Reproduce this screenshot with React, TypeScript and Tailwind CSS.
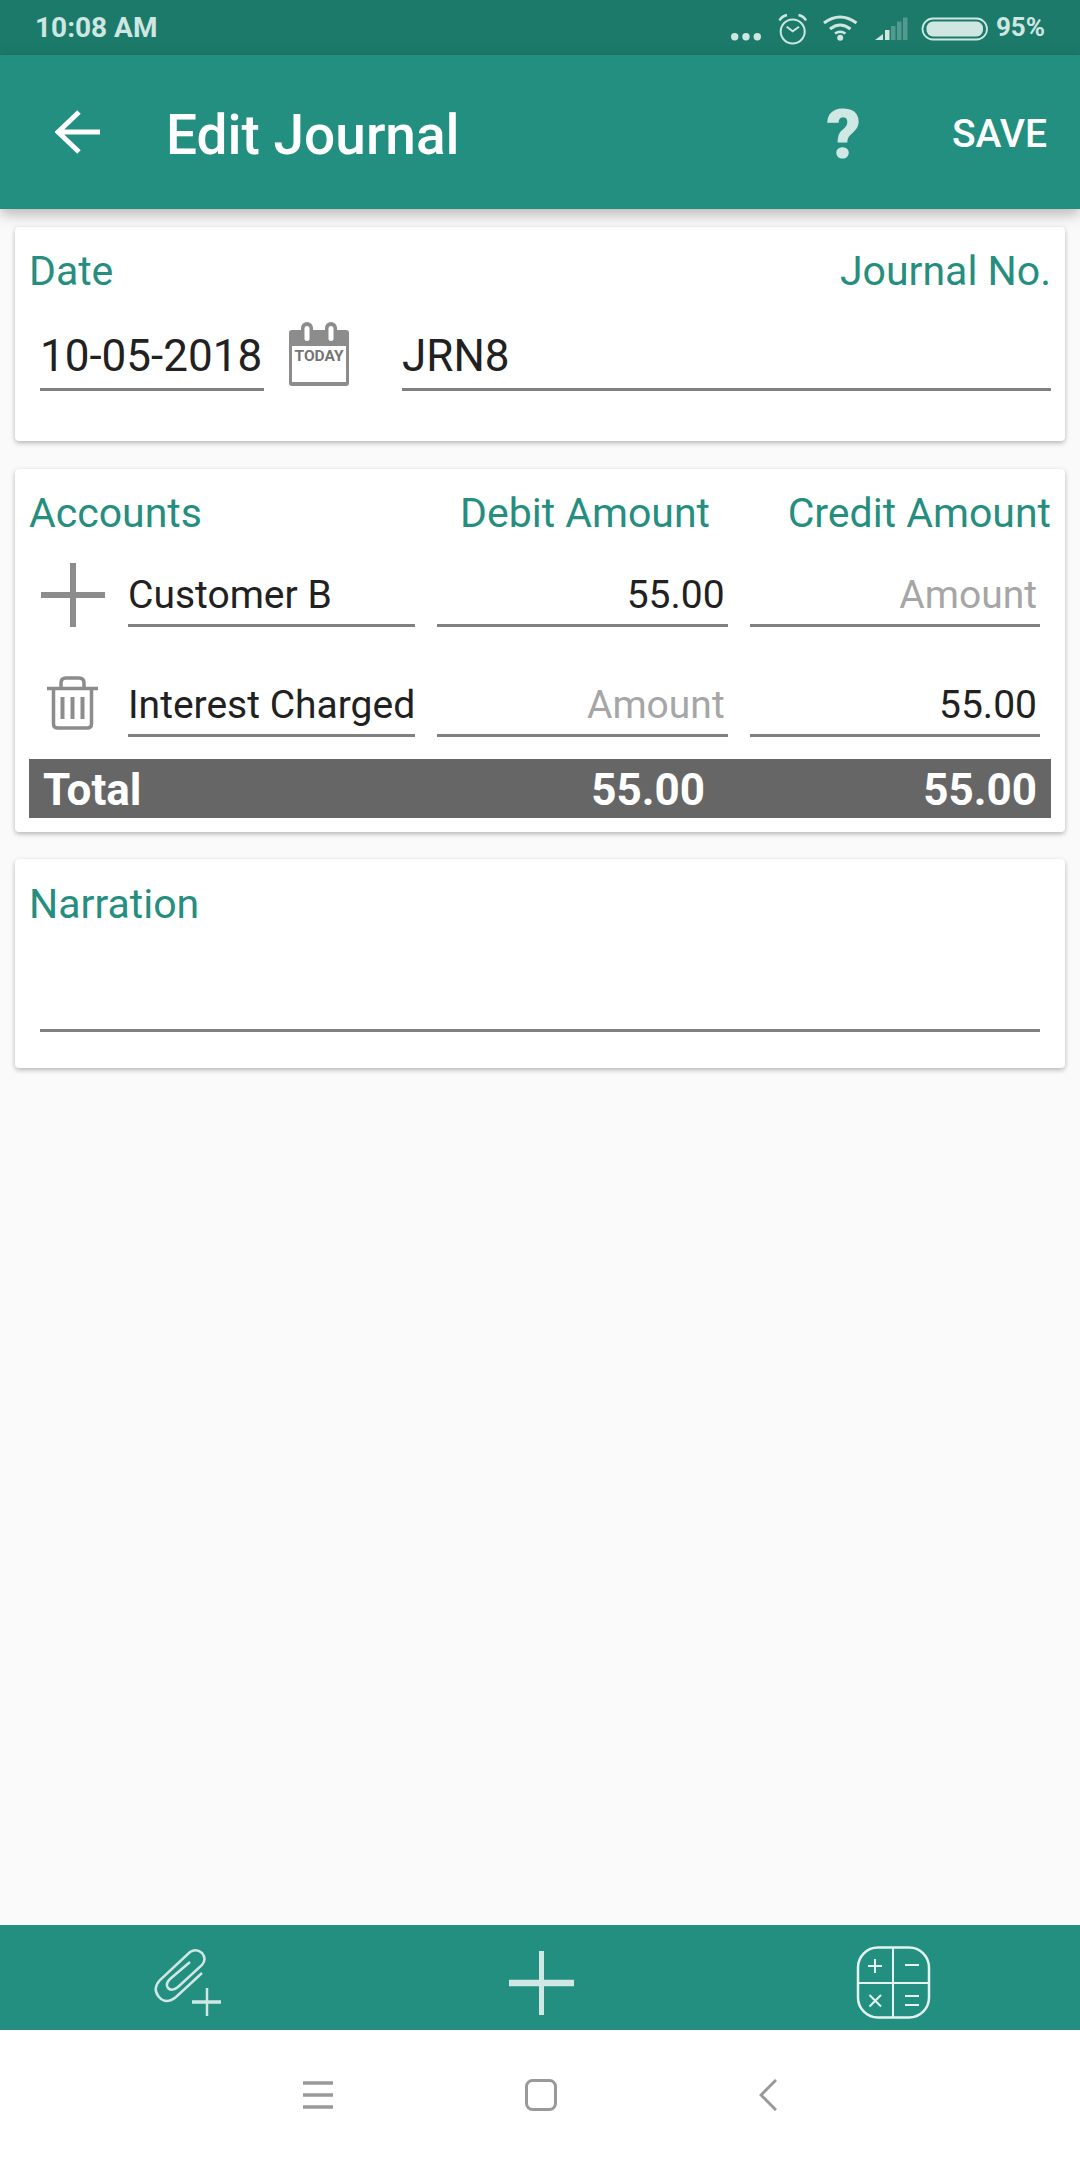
import type { ReactNode } from 'react';

function StatusIcons() {
  return (
    <svg width="270" height="45" viewBox="0 0 270 45" fill="none" stroke="#cfe6e1" className="block">
      <g fill="#cfe6e1" stroke="none">
        <circle cx="14.7" cy="30.7" r="3.7" />
        <circle cx="26" cy="30.7" r="3.7" />
        <circle cx="37.3" cy="30.7" r="3.7" />
      </g>
      <circle cx="72.7" cy="25.5" r="12" strokeWidth="2" />
      <path d="M59.5 14.5Q62 10 67 9M86 14.5Q83.5 10 78.500 9" strokeWidth="2.500" />
      <path d="M66.700 20.700L72.700 25.300L79 20.700" strokeWidth="2" />
      <path d="M104 17Q120 5 136.500 17M110 23Q120 15 130.500 23" strokeWidth="3" />
      <path d="M115 27.500Q120 24 125.500 27.500" strokeWidth="2.500" />
      <circle cx="120.200" cy="31.700" r="3" fill="#cfe6e1" stroke="none" />
      <g fill="#cfe6e1" stroke="none">
        <path d="M155 34L163 28V34Z" />
        <rect x="165" y="24" width="4.500" height="10" />
        <rect x="171" y="20" width="4.500" height="14" opacity="0.3" />
        <rect x="177" y="15.500" width="4.500" height="18.500" opacity="0.3" />
        <rect x="183" y="11.500" width="4.500" height="22.500" opacity="0.3" />
      </g>
      <rect x="202.500" y="12.500" width="64.500" height="21" rx="10.500" strokeWidth="1.800" />
      <rect x="206.500" y="15.500" width="56.500" height="15" rx="6.500" fill="#cfe6e1" stroke="none" />
    </svg>
  );
}

function Calendar() {
  return (
    <svg width="60" height="64" viewBox="0 0 60 64" className="block">
      <path d="M3 8H57Q60 8 60 11V61Q60 64 57 64H3Q0 64 0 61V11Q0 8 3 8Z" fill="#8c8c8c" />
      <rect x="3" y="24" width="54" height="36" fill="#ffffff" />
      <rect x="12" y="0" width="12" height="20" rx="6" fill="#8c8c8c" />
      <rect x="36" y="0" width="12" height="20" rx="6" fill="#8c8c8c" />
      <rect x="15.500" y="4" width="5" height="15" rx="2.500" fill="#ffffff" />
      <rect x="39.500" y="4" width="5" height="15" rx="2.500" fill="#ffffff" />
      <text x="30" y="38.500" textAnchor="middle" fontSize="15.500" fontWeight="700" fill="#757575" fontFamily="Roboto, sans-serif">
        TODAY
      </text>
    </svg>
  );
}

function Trash() {
  return (
    <svg width="51" height="54" viewBox="0 0 51 54" fill="none" stroke="#8c8c8c" className="block mb-[7px]">
      <path d="M0 12.500H51" strokeWidth="3.500" />
      <path d="M14 11V7Q14 2 19 2H32Q37 2 37 7V11" strokeWidth="3.500" />
      <path d="M6.500 13V48Q6.500 52 11 52H40Q44.500 52 44.500 48V13" strokeWidth="3.500" />
      <path d="M15.500 21V43M25.500 21V43M35.500 21V43" strokeWidth="4" />
    </svg>
  );
}

function Field({ children, muted, right }: { children?: ReactNode; muted?: boolean; right?: boolean }) {
  return (
    <div
      className={`h-[57px] min-w-0 flex-1 basis-0 border-b-[3px] border-[#808080] text-[39px] leading-[50px] whitespace-nowrap ${
        right ? 'pr-[3px] text-right' : ''
      } ${muted ? 'text-[#a6a6a6]' : 'text-[#212121]'}`}
    >
      {children}
    </div>
  );
}

function Card({ children, className }: { children: ReactNode; className: string }) {
  return (
    <section className={`mx-[15px] rounded-[4px] bg-white px-[14px] shadow-[0_2px_5px_rgba(0,0,0,0.28)] ${className}`}>
      {children}
    </section>
  );
}

export default function App() {
  return (
    <div className="flex h-[2160px] w-[1080px] flex-col overflow-hidden bg-[#fafafa] font-['Roboto',sans-serif]">
      <div className="flex h-[55px] items-center bg-[#1c7a6b] pl-[35px] pr-[35px] text-[#cfe6e1]">
        <span className="text-[28px] font-bold">10:08 AM</span>
        <div className="ml-auto mr-[6px] pt-[1px]">
          <StatusIcons />
        </div>
        <span className="text-[26px] font-bold">95%</span>
      </div>

      <header className="relative z-10 flex h-[154px] items-center bg-[#238f80] pl-[55px] pr-[33px] text-white shadow-[0_5px_14px_rgba(0,0,0,0.28)]">
        <svg width="45" height="44" viewBox="0 0 45 44" fill="none" stroke="#ffffff" strokeWidth="5" className="block">
          <path d="M45 22H3M24 2L3 22L24 42" />
        </svg>
        <h1 className="ml-[66px] mt-[6px] text-[55px] font-medium leading-none">Edit Journal</h1>
        <span className="ml-auto mt-[5px] text-[68px] font-black leading-none text-[#cfe8e4]">?</span>
        <span className="ml-[91px] mt-[5px] text-[39px] font-medium leading-none">SAVE</span>
      </header>

      <main className="flex-1 pt-[18px]">
        <Card className="h-[214px] pt-[21px]">
          <div className="flex justify-between text-[41px] leading-[46px] text-[#258e7f]">
            <span>Date</span>
            <span>Journal No.</span>
          </div>
          <div className="mt-[28px] flex items-end">
            <div className="ml-[11px] h-[61px] w-[224px] border-b-[3px] border-[#808080] text-[44px] leading-[52px] text-[#212121]">
              10-05-2018
            </div>
            <div className="ml-[25px] mb-[5px]">
              <Calendar />
            </div>
            <div className="ml-[53px] h-[61px] flex-1 border-b-[3px] border-[#808080] text-[44px] leading-[52px] text-[#212121]">
              JRN8
            </div>
          </div>
        </Card>

        <Card className="mt-[28px] h-[363px] pt-[21px]">
          <div className="flex text-[41px] leading-[46px] text-[#258e7f]">
            <span className="flex-1">Accounts</span>
            <span>Debit Amount</span>
            <span className="w-[341px] text-right">Credit Amount</span>
          </div>
          <div className="mt-[34px] flex h-[57px] items-end pr-[11px]">
            <div className="flex w-[99px] justify-start pl-[12px]">
              <svg width="64" height="64" viewBox="0 0 64 64" stroke="#8c8c8c" strokeWidth="6" className="block">
                <path d="M0 32H64M32 0V64" />
              </svg>
            </div>
            <div className="flex flex-1 gap-[22px]">
              <Field>Customer B</Field>
              <Field right>55.00</Field>
              <Field right muted>Amount</Field>
            </div>
          </div>
          <div className="mt-[53px] flex h-[57px] items-end pr-[11px]">
            <div className="flex w-[99px] justify-start pl-[18px]">
              <Trash />
            </div>
            <div className="flex flex-1 gap-[22px]">
              <Field>Interest Charged</Field>
              <Field right muted>Amount</Field>
              <Field right>55.00</Field>
            </div>
          </div>
          <div className="mt-[22px] flex h-[59px] items-center bg-[#666666] pl-[14px] pr-[14px] pt-[4px] text-[44px] font-bold leading-[55px] text-white">
            <span className="flex-1">Total</span>
            <span>55.00</span>
            <span className="w-[332px] text-right">55.00</span>
          </div>
        </Card>

        <Card className="mt-[27px] h-[209px] pt-[22px]">
          <div className="text-[41px] leading-[46px] text-[#258e7f]">Narration</div>
          <div className="ml-[11px] mr-[11px] mt-[102px] border-b-[3px] border-[#808080]" />
        </Card>
      </main>

      <div className="flex h-[105px] items-start bg-[#238f80] pl-[140px] pt-[10px]">
        <svg width="100" height="90" viewBox="0 0 100 90" fill="none" stroke="#cfe8e4" className="block">
          <path
            d="M62 38L36 62Q26 70 19 62Q12 54 20 45L50 17Q56 13 62 18Q67 24 62 30L38 52Q32 57 28 53Q25 49 30 44L50 27"
            strokeWidth="2.500"
          />
          <path d="M52 67H81" strokeWidth="3.500" />
          <path d="M67 53V81" strokeWidth="2.500" />
        </svg>
        <svg width="100" height="90" viewBox="0 0 100 90" fill="none" stroke="#cfe8e4" className="ml-[250px] block">
          <path d="M19 48H84" strokeWidth="6.500" />
          <path d="M51.500 16V80" strokeWidth="5" />
        </svg>
        <svg width="100" height="90" viewBox="0 0 100 90" fill="none" stroke="#e4f3f0" className="ml-[255px] block">
          <rect x="13" y="12.500" width="71" height="70" rx="20" strokeWidth="2.500" />
          <path d="M48 12.500V82.500M13 48H84" strokeWidth="2" />
          <path d="M23 31H37M30 24V38M60 30H74M24.500 60L36 71.500M36 60L24.500 71.500M60 61H74M60 70H74" strokeWidth="2" />
        </svg>
      </div>

      <nav className="flex h-[130px] items-center justify-center bg-white">
        <svg width="30" height="30" viewBox="0 0 30 30" stroke="#999999" strokeWidth="3.500" className="block">
          <path d="M0 3H30M0 15H30M0 27H30" />
        </svg>
        <svg width="32" height="32" viewBox="0 0 32 32" fill="none" stroke="#999999" strokeWidth="3" className="ml-[192px] block">
          <rect x="1.500" y="1.500" width="29" height="29" rx="6" />
        </svg>
        <svg width="18" height="32" viewBox="0 0 18 32" fill="none" stroke="#999999" strokeWidth="3" className="ml-[202px] block">
          <path d="M17 1L2 16L17 31" />
        </svg>
      </nav>
    </div>
  );
}
